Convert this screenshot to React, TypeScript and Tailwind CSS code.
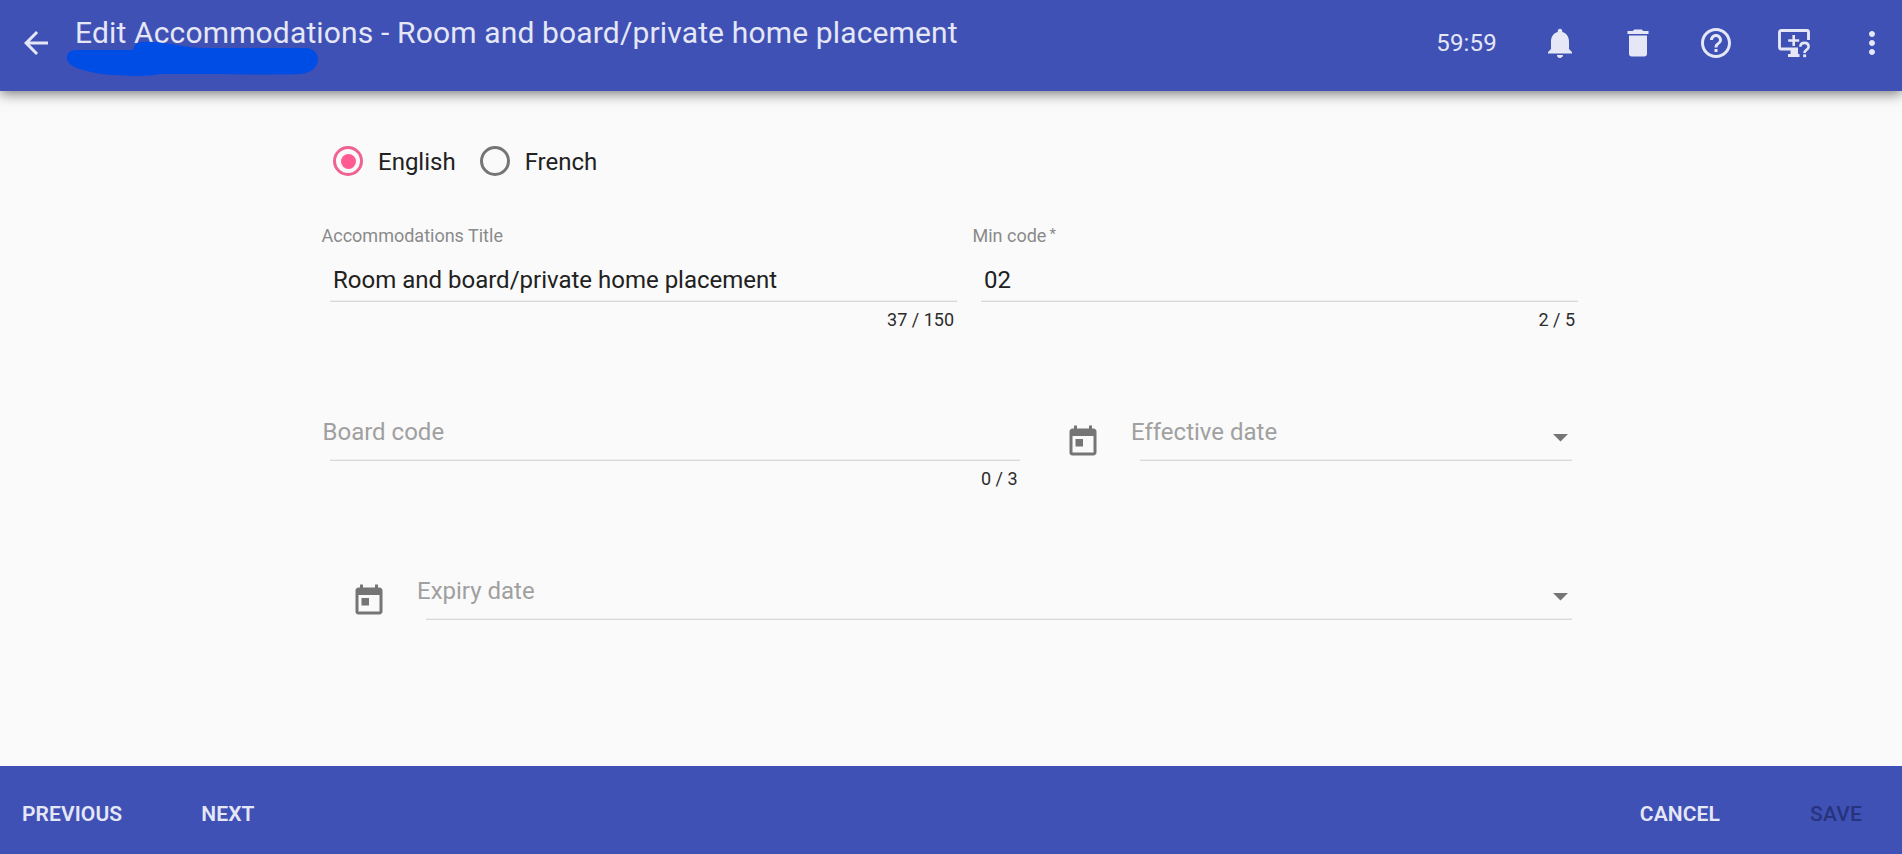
import type { ReactNode } from "react";
import {
  MdArrowBack,
  MdHelpOutline,
  MdMoreVert,
  MdNotifications,
  MdToday,
} from "react-icons/md";

function TrashIcon() {
  return (
    <svg viewBox="0 0 24 24" className="size-9 fill-current">
      <path d="M19 4v2H5V4h3.500l1-1h5l1 1zM6 7h12v12.300c0 1-.8 1.700-1.700 1.700H7.700C6.800 21 6 20.300 6 19.300z" />
    </svg>
  );
}

function ScreenHelpIcon() {
  return (
    <svg viewBox="0 0 36 36" className="size-9 fill-none stroke-current">
      <path d="M22 24H5.200a1.700 1.700 0 0 1-1.700-1.700V7.200a1.700 1.700 0 0 1 1.700-1.700h25.600a1.700 1.700 0 0 1 1.700 1.700V15" strokeWidth="2.900" />
      <path d="M17.700 10v11M12.200 15.500h11" strokeWidth="2.600" />
      <path d="M14.500 25h7.500v4h1.500v3H12v-3h2.500z" stroke="none" fill="currentColor" />
      <path d="M24.400 21.800c0-2.400 1.700-3.900 4.100-3.900s4.100 1.500 4.100 3.800c0 3-4.100 3.200-4.100 6.300" strokeWidth="2.600" />
      <path d="M27.200 29.300h2.900v2.900h-2.900z" stroke="none" fill="currentColor" />
    </svg>
  );
}

function Radio({ label, checked }: { label: string; checked?: boolean }) {
  return (
    <label className="flex h-[30px] items-center gap-[15px]">
      <span
        className={
          checked
            ? "flex size-[30px] items-center justify-center rounded-full border-[3px] border-[#f06292]"
            : "flex size-[30px] rounded-full border-[3px] border-[#757575]"
        }
      >
        {checked && <span className="size-[15px] rounded-full bg-[#ff5a92]" />}
      </span>
      <span className="pt-px leading-[30px]">{label}</span>
    </label>
  );
}

function Underline() {
  return <div className="h-[2px] border-b border-[#d9d9d9] bg-[#eeeeee]" />;
}

function TextField({
  label,
  required,
  value,
  count,
  className,
}: {
  label: string;
  required?: boolean;
  value: string;
  count: string;
  className: string;
}) {
  return (
    <div className={className}>
      <div className="h-10 pl-[0.5px] text-[18px] leading-6 text-[#8a8a8a]">
        {label}
        {required && <span className="pl-[3px] align-[3px] text-[15px] leading-none">*</span>}
      </div>
      <div className="ml-[9px]">
        <div className="h-9 pl-[3px] leading-8">{value}</div>
        <Underline />
      </div>
      <div className="pt-[6px] pr-[3px] text-right text-[18px] leading-6 text-[#2c2c2c]">{count}</div>
    </div>
  );
}

function DateField({ label, className }: { label: string; className: string }) {
  return (
    <div className={className}>
      <MdToday className="mt-2 size-9 shrink-0 text-[#757575]" />
      <div className="ml-[30px] flex-1">
        <div className="flex h-[43px] justify-between pr-1">
          <span className="leading-8 text-[#a0a0a0]">{label}</span>
          <svg viewBox="0 0 15 8" className="mt-[18px] h-2 w-[15px] fill-[#757575]">
            <path d="M0 0h15L7.500 7.500z" />
          </svg>
        </div>
        <div className="ml-[9px]">
          <Underline />
        </div>
      </div>
    </div>
  );
}

function BarButton({ children, className }: { children: ReactNode; className: string }) {
  return <button className={className}>{children}</button>;
}

export default function App() {
  return (
    <div className="flex h-screen flex-col bg-[#fafafa] font-['Roboto',sans-serif] text-[24px] text-[#212121]">
      <header className="relative z-10 flex h-[91px] items-start bg-[#3f51b5] text-[#e5e7f6] shadow-[0_3px_12px_rgba(0,0,0,0.5)]">
        <MdArrowBack className="mt-[25px] ml-[18px] size-9" />
        <h1 className="mt-[15px] ml-[21px] flex-1 text-[30px] leading-9 tracking-[0.15px]">
          Edit Accommodations - Room and board/private home placement
        </h1>
        <svg viewBox="0 0 260 40" className="absolute top-10 left-[61px] h-10 w-[260px] fill-[#004de6]">
          <path d="M15 10h57c1-4 3-7 7-8 12-1 25 1 37 3 9 2 18 3 30 3h99c7 0 12 5 12 11 0 8-7 14-17 15-40 1-80 0-140 0-15 3-38 2-60 0-12-2-24-5-30-9C3 20 5 10 15 10z" />
        </svg>
        <div className="mt-[25px] flex h-9 items-center">
          <span className="leading-9 tracking-[0.2px]">59:59</span>
          <div className="ml-[45px] flex gap-[42px]">
            <MdNotifications className="size-9" />
            <TrashIcon />
            <MdHelpOutline className="size-9" />
            <ScreenHelpIcon />
            <MdMoreVert className="mr-3 size-9" />
          </div>
        </div>
      </header>

      <main className="flex-1 pt-[55px] pl-[321px]">
        <div className="flex gap-6 pl-3">
          <Radio label="English" checked />
          <Radio label="French" />
        </div>
        <div className="flex gap-[15px] pt-12">
          <TextField
            className="w-[636px]"
            label="Accommodations Title"
            value="Room and board/private home placement"
            count="37 / 150"
          />
          <TextField className="w-[606px]" label="Min code" required value="02" count="2 / 5" />
        </div>
        <div className="flex h-[159px] pt-[84px]">
          <div className="w-[699px]">
            <div className="h-[43px] pl-[1.5px] leading-8 text-[#a0a0a0]">Board code</div>
            <div className="ml-[9px]">
              <Underline />
            </div>
            <div className="pt-[6px] pr-[2.5px] text-right text-[18px] leading-6 text-[#2c2c2c]">0 / 3</div>
          </div>
          <DateField className="ml-[45px] flex w-[507px]" label="Effective date" />
        </div>
        <DateField className="mt-[84px] ml-[30px] flex w-[1221px]" label="Expiry date" />
      </main>

      <footer className="flex h-[88px] items-center bg-[#3f51b5] pt-[9px] text-[21px] font-semibold tracking-[0.1px] text-[#e5e7f6]">
        <BarButton className="ml-[22px]">PREVIOUS</BarButton>
        <BarButton className="ml-[79px]">NEXT</BarButton>
        <BarButton className="mr-[90px] ml-auto">CANCEL</BarButton>
        <BarButton className="mr-[40px] font-medium tracking-[0.2px] text-[#27347d]">SAVE</BarButton>
      </footer>
    </div>
  );
}
